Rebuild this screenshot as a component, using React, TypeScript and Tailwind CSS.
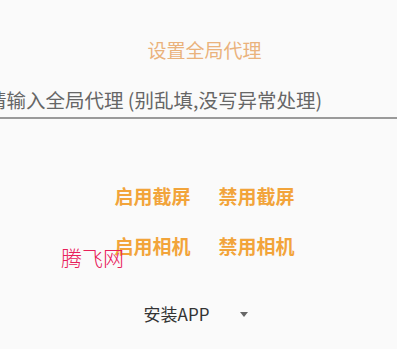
export default function App() {
  return (
    <div
      className="relative flex h-[349px] w-[397px] flex-col overflow-hidden bg-[#fafafa]"
      style={{ fontFamily: '"Noto Sans CJK SC", "Noto Sans", sans-serif' }}
    >
      <div className="mt-[40px] pl-[12px] text-center text-[19px] leading-[20px] text-[#eab27c]">
        设置全局代理
      </div>

      <div className="mt-[28px] w-full border-b-2 border-[#9a9a9a] pb-[5px]">
        <div className="-ml-[13px] whitespace-nowrap text-[19.5px] leading-[24px] text-[#666]">
          请输入全局代理 (别乱填,没写异常处理)
        </div>
      </div>

      <div className="mt-[67px] flex justify-center gap-[28px] pl-[12px] text-[19px] font-bold leading-[20px] text-[#f2a43a]">
        <button type="button">启用截屏</button>
        <button type="button">禁用截屏</button>
      </div>
      <div className="mt-[30px] flex justify-center gap-[28px] pl-[12px] text-[19px] font-bold leading-[20px] text-[#f2a43a]">
        <button type="button">启用相机</button>
        <button type="button">禁用相机</button>
      </div>

      <div className="mt-[48px] flex items-center justify-center gap-[31px] pr-[5px]">
        <span className="text-[17px] leading-[20px] text-[#333]">安装APP</span>
        <svg width="8" height="5" viewBox="0 0 8 5">
          <path d="M0 0h8L4 5z" fill="#666" />
        </svg>
      </div>

      <div className="absolute left-[61px] top-[245px] text-[21px] font-light leading-[24px] text-[#e8205a]">
        腾飞网
      </div>
    </div>
  );
}
